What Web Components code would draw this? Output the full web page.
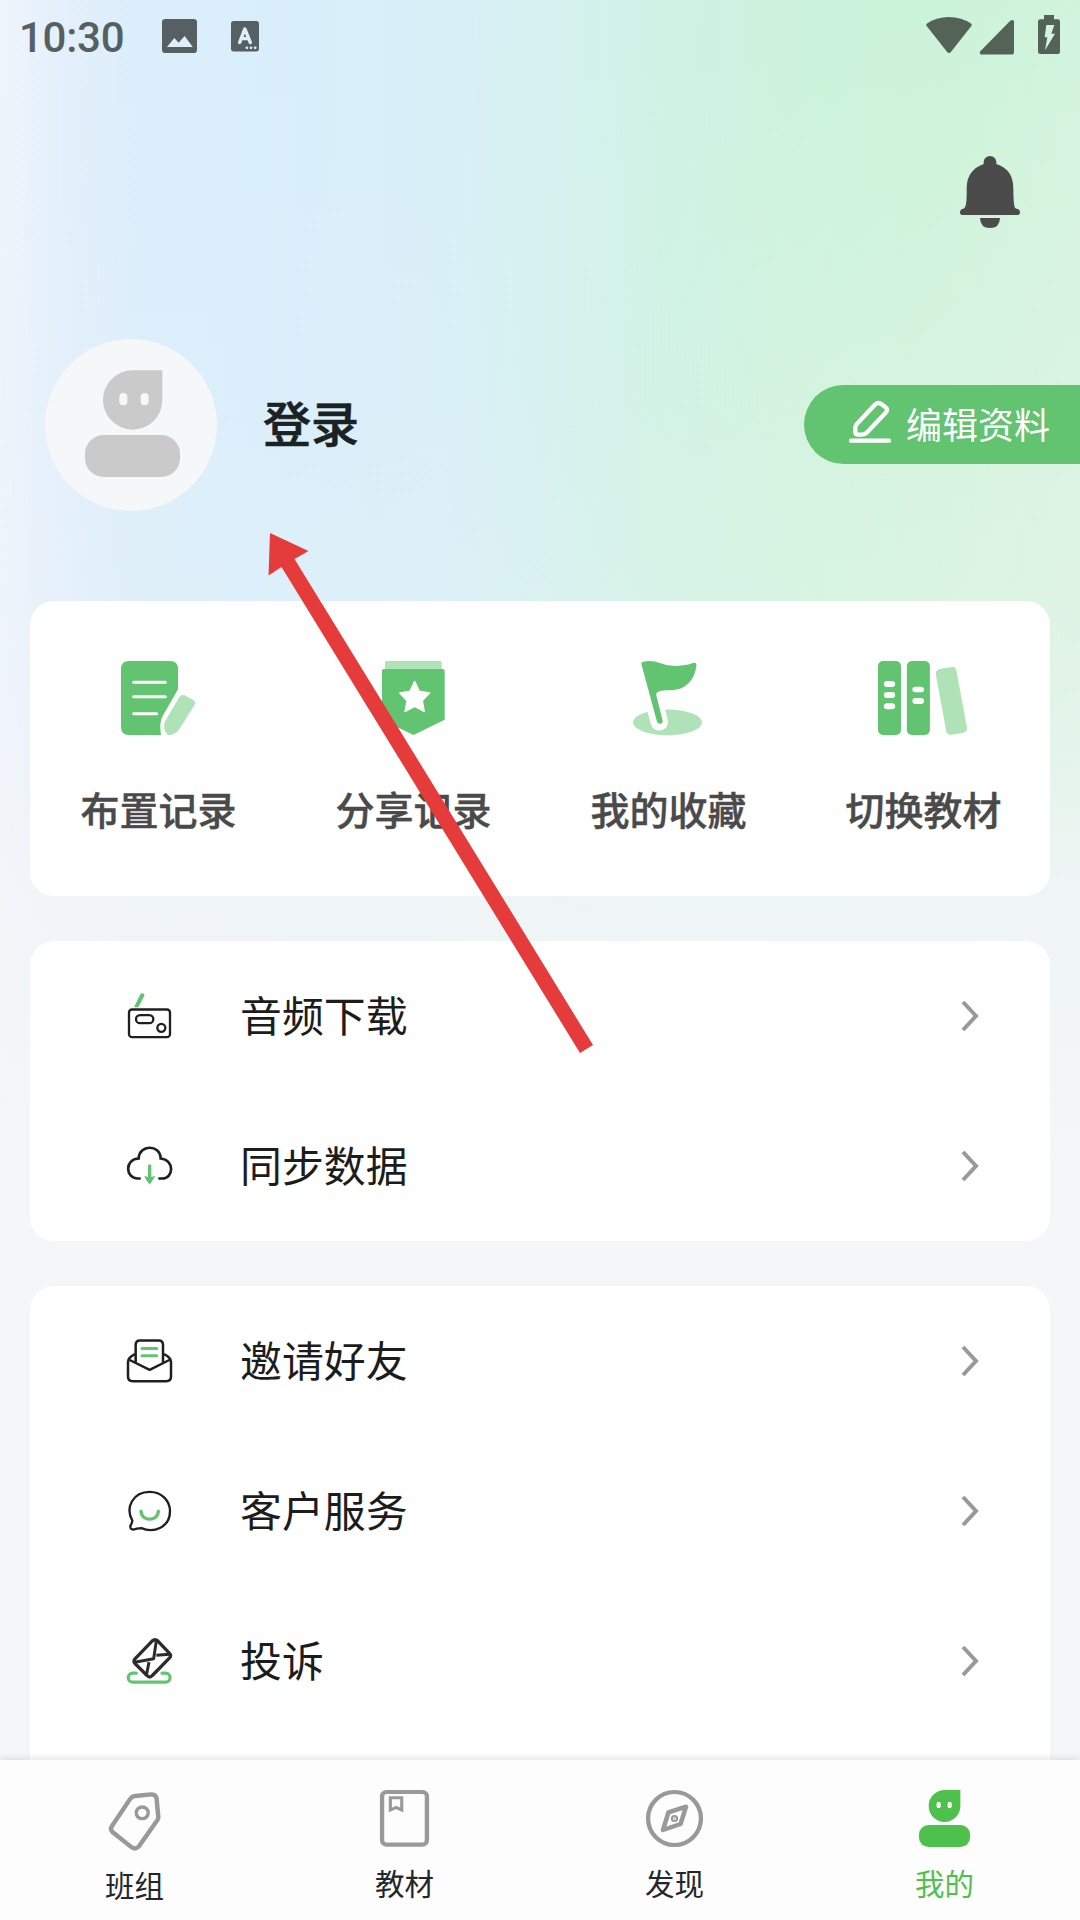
<!DOCTYPE html>
<html lang="zh-CN">
<head>
<meta charset="utf-8">
<title>我的</title>
<style>
html,body{margin:0;padding:0}
body{width:1080px;height:1920px;overflow:hidden;font-family:"Noto Sans CJK SC","Noto Sans",sans-serif;color:#1c1c1c}
</style>
</head>
<body>
<my-page></my-page>
<script>
const G='#62c370', L='#b0e2b7', K='#1f1f1f';
const icons={
 image:[35,34,'470 57 99 102',`<rect x="470" y="57" width="99" height="102" rx="10" fill="#566062"/><path d="M484 141L505 114L517 128L534 108L557 141Z" fill="#dceffa"/>`],
 font:[28,30.5,'671 62 81 92',`<rect x="671" y="62" width="81" height="92" rx="8" fill="#566062"/><path d="M696 127L711 86L727 127M701 115H722" fill="none" stroke="#dceffa" stroke-width="10" stroke-linecap="round" stroke-linejoin="round"/><g fill="#dceffa"><circle cx="717" cy="143" r="4"/><circle cx="729" cy="143" r="4"/><circle cx="741" cy="143" r="4"/></g>`],
 wifi:[46,36,'437 51 137 108',`<path d="M439 71Q468 51 505 51Q543 51 572 71Q575 74 572 78L511 156Q505 162 500 156L439 78Q436 74 439 71Z" fill="#546258"/>`],
 signal:[34,34.5,'600 59 102 103',`<path d="M601 152L690 62Q702 55 702 66V156Q702 162 696 162H604Q597 160 601 152Z" fill="#546258"/>`],
 battery:[22,39,'774 45 66 117',`<path d="M792 45H822V58H834Q840 58 840 65V155Q840 162 834 162H781Q774 162 774 155V65Q774 58 781 58H792Z" fill="#546258"/><path d="M799 75H823L814 101H825L795 151L802 112H794Z" fill="#d3f5de"/>`],
 bell:[60,72,'540 468 180 216',`<path d="M611 492V486A19 18 0 0 1 649 486V492Q699 508 700 563Q700 618 706 625L715 628Q720 631 720 637Q720 645 713 645H547Q540 645 540 637Q540 631 545 628Q553 627 555 622Q561 610 560 563Q561 510 611 492Z" fill="#4b4b4b"/><path d="M600 654H660Q659 684 630 684Q601 684 600 654Z" fill="#4b4b4b"/>`],
 avatar:[172,172,'45 57 516 516',`<circle cx="303" cy="315" r="258" fill="#f5f7f9"/><path d="M308 151H397V241A89 89 0 1 1 308 151Z" fill="#cacaca"/><rect x="165" y="345" width="285" height="126" rx="56" fill="#cacaca"/><g fill="#f5f7f9"><rect x="268" y="219" width="24" height="37" rx="12"/><rect x="332" y="219" width="24" height="37" rx="12"/></g>`],
 edit:[42,42,'207 120 126 126',`<g fill="none" stroke="#fff" stroke-linecap="round" stroke-linejoin="round"><path d="M286 130Q295 122 304 129L318 140Q325 146 317 155L260 215Q255 221 244 221H233Q226 221 226 213V198Q227 193 231 188Z" stroke-width="13"/><path d="M213 239H327" stroke-width="13"/></g>`],
 doc:[74,74,'273 213 222 222',`<path d="M297 213H420Q444 213 444 237V298L398 378Q387 396 393 435H297Q273 435 273 411V237Q273 213 297 213Z" fill="${G}"/><path d="M311 277H406M311 320H406M311 371H380" stroke="#fff" stroke-width="9" stroke-linecap="round"/><path d="M448 321Q456 311 467 317L490 330Q498 336 494 344L447 419Q436 434 416 435Q404 431 402 409Q402 400 406 393Z" fill="${L}"/>`],
 shield:[63,74,'1056 213 190 222',`<path d="M1065 240V218Q1065 213 1070 213H1231Q1236 213 1236 218V240Z" fill="${L}"/><path d="M1062 237H1239Q1245 237 1245 243V389L1151 435L1056 389V243Q1056 237 1062 237Z" fill="${G}"/><path d="M1154.500 275L1168 304L1199 309L1177 332L1183 364L1154.500 349L1126 364L1132 332L1110 309L1141 304Z" fill="#fff" stroke="#fff" stroke-width="5" stroke-linejoin="round"/>`],
 flag:[69,74,'270 213 200 222',`<ellipse cx="370" cy="397" rx="100" ry="38.500" fill="${L}"/><path d="M336 355L346 396" stroke="#fff" stroke-width="51" stroke-linecap="round"/><path d="M294 221Q293 216 300 215Q325 209 348 219Q380 233 415 226Q431 224 446 218Q454 217 454 224C451 260 433 286 406 296C380 304 352 296 339 308Q336 311 338 318L356 392Q356 402 347 401Q341 401 339 393Z" fill="${G}"/>`],
 books:[89,74,'981 213 259 222',`<g fill="${G}"><rect x="981" y="213" width="67" height="222" rx="15"/><rect x="1065" y="213" width="67" height="222" rx="15"/></g><path d="M1160 237L1197 231Q1207 230 1209 241L1240 414Q1241 424 1230 428L1194 434Q1184 435 1180 425L1149 252Q1148 241 1160 237Z" fill="${L}"/><g fill="#fff"><rect x="998" y="273" width="33" height="18" rx="9"/><rect x="998" y="306" width="33" height="18" rx="9"/><rect x="998" y="340" width="33" height="18" rx="9"/><rect x="1081" y="290" width="34" height="17" rx="9"/><rect x="1081" y="324" width="34" height="18" rx="9"/></g>`],
 radio:[45,45,'81 100.500 135 135',`<path d="M102 140L121 101Q124 97 130 99Q135 101 133 106L115 140Z" fill="${G}"/><g fill="none" stroke="${K}" stroke-width="7"><rect x="87" y="147" width="123" height="83" rx="9"/><rect x="108" y="164" width="52" height="24" rx="12"/><circle cx="184" cy="202" r="12"/></g>`],
 cloud:[45,45,'81 550.500 135 135',`<path d="M122 654H113C76 654 73 596 116 594C117 552 180 550 182 594C224 597 222 654 186 654H175" fill="none" stroke="${K}" stroke-width="8"/><path d="M149 616V652" stroke="${G}" stroke-width="10" stroke-linecap="round"/><path d="M133 646Q149 653 165 646Q164 653 149 672Q135 656 133 646Z" fill="${G}"/>`],
 invite:[45,45,'81 85.500 135 135',`<g fill="none" stroke="${K}" stroke-width="7.500" stroke-linejoin="round"><path d="M107 156V103Q107 90 120 90H176Q189 90 189 103V156"/><path d="M105 131Q84 141 84 154V199Q84 212 98 212H199Q213 212 213 199V154Q213 141 192 131M86 147L149 178L211 147"/></g><path d="M126 114H170M126 136H170" stroke="${G}" stroke-width="9" stroke-linecap="round"/>`],
 service:[45,45,'81 535.500 135 135',`<path d="M97 630C75 591 99 544 149 544C185 544 210 571 210 602C210 650 162 669 124 653Q109 654 101 657Q90 658 91 646Q97 637 97 630Z" fill="none" stroke="${K}" stroke-width="7" stroke-linejoin="round"/><path d="M123 602C124 634 174 634 175 602" fill="none" stroke="${G}" stroke-width="10" stroke-linecap="round"/>`],
 complaint:[45,45,'81 985.500 135 135',`<path d="M109 1088H99C80 1088 80 1115 99 1115H196C215 1115 215 1088 196 1088H186" fill="none" stroke="${G}" stroke-width="9.500" stroke-linecap="round"/><g fill="none" stroke="#2c2c2c" stroke-width="10" stroke-linejoin="round"><path d="M157 991Q165 984 173 991L208 1028Q216 1035 208 1043L157 1095Q149 1104 141 1095L105 1059Q99 1052 105 1045Z"/><path d="M169 991L161 1045L104 1055M209 1031L169 1034M147 1055L139 1095" stroke-width="9"/></g>`],
 chevron:[18,32,'0 0 18 32',`<path d="M2 2L15 16L2 30" fill="none" stroke="#999" stroke-width="4"/>`],
 tag:[52,59,'317 155 151 177',`<path d="M379 175Q384 168 393 167L439 162Q452 162 455 173L460 228Q461 234 457 240L403 319Q394 329 383 321L327 275Q320 268 325 258Z" fill="none" stroke="#999" stroke-width="13" stroke-linejoin="round"/><circle cx="413.500" cy="217.500" r="17.500" fill="none" stroke="#999" stroke-width="10"/>`],
 book:[49,57,'1101 150 142 171',`<rect x="1107" y="156" width="130" height="158" rx="13" fill="none" stroke="#999" stroke-width="12.500"/><path d="M1131 173H1164V210L1148 202L1131 210Z" fill="none" stroke="#999" stroke-width="9"/>`],
 compass:[57,57,'308 150 165 171',`<ellipse cx="390.500" cy="235.500" rx="76.500" ry="79.500" fill="none" stroke="#999" stroke-width="12.500"/><path d="M373 217L424 200L408 252L357 270Z" fill="none" stroke="#999" stroke-width="13" stroke-linejoin="round"/><circle cx="390.500" cy="235.500" r="7.500" fill="none" stroke="#999" stroke-width="6"/><circle cx="390.500" cy="235.500" r="2" fill="#999"/>`],
 me:[51,57,'1101 150 148 171',`<path d="M1175 150H1221V198A46 48 0 1 1 1175 150Z" fill="#4dc14b"/><rect x="1101" y="255" width="148" height="66" rx="28" fill="#4dc14b"/><g fill="#fff"><rect x="1152" y="185" width="12" height="20" rx="6"/><rect x="1184" y="185" width="12" height="20" rx="6"/></g>`]
};
const define=(name,render)=>customElements.define(name,class extends HTMLElement{
  connectedCallback(){ if(!this.shadowRoot) this.attachShadow({mode:'open'}).innerHTML=render(this); }
});
define('ui-icon',el=>{
  const [w,h,vb,body]=icons[el.getAttribute('name')];
  return `<style>:host{display:block;flex:none}svg{display:block;overflow:visible}</style><svg width="${w}" height="${h}" viewBox="${vb}" preserveAspectRatio="none">${body}</svg>`;
});
define('status-bar',()=>`<style>
:host{display:flex;height:72px;box-sizing:border-box;padding:0 20px 0 19px;align-items:center;justify-content:space-between}
.l,.r{display:flex}.l{align-items:center}.r{align-items:flex-end;height:39px;margin-bottom:3px}
time{font:500 42px/44px Roboto,sans-serif;color:#566062;width:143px;letter-spacing:-.25px;margin-top:4px}
.a{margin-right:34px}.w{margin:0 8px 1px 0}.s{margin-right:24px}
</style><div class="l"><time>10:30</time><ui-icon class="a" name="image"></ui-icon><ui-icon name="font"></ui-icon></div>
<div class="r"><ui-icon class="w" name="wifi"></ui-icon><ui-icon class="s" name="signal"></ui-icon><ui-icon name="battery"></ui-icon></div>`);
define('profile-header',()=>`<style>
:host{display:flex;flex-direction:column;height:529px}
.top{display:flex;justify-content:flex-end;padding:84px 60px 0 0;height:183px}
.row{display:flex;align-items:center;padding-left:45px;height:172px}
h1{margin:0 auto 8px 46px;font-size:48px;line-height:60px;font-weight:500;color:#1b2223;-webkit-text-stroke:.7px #1b2223}
</style><div class="top"><ui-icon name="bell"></ui-icon></div>
<div class="row"><ui-icon name="avatar"></ui-icon><h1>登录</h1><edit-button>编辑资料</edit-button></div>`);
define('edit-button',()=>`<style>
:host{display:flex;box-sizing:border-box;width:276px;height:79px;margin-bottom:2px;border-radius:40px 0 0 40px;background:#62c370;color:#fff;align-items:center;padding-left:45px;gap:15px;font-size:36px;line-height:48px}
ui-icon{margin-bottom:5px}span{margin-bottom:2px}
</style><ui-icon name="edit"></ui-icon><span><slot></slot></span>`);
define('panel-card',()=>`<style>:host{display:flex;flex-direction:column;flex:none;margin:0 30px;border-radius:24px;background:#fff;box-sizing:border-box}</style><slot></slot>`);
define('quick-actions',()=>`<style>:host{display:grid;grid-template-columns:repeat(4,255px);height:295px}</style><slot></slot>`);
define('quick-action',el=>`<style>
:host{display:flex;flex-direction:column;align-items:center;padding:60px 0 0 1px;font-size:39px;line-height:56px;font-weight:500;color:#4a4a4a;-webkit-text-stroke:.4px #4a4a4a}
:host([icon=shield]) ui-icon{padding-left:1px}
:host([icon=flag]) ui-icon,:host([icon=books]) ui-icon{padding-right:2px}
span{margin-top:45px;padding-left:1px}
</style><ui-icon name="${el.getAttribute('icon')}"></ui-icon><span><slot></slot></span>`);
define('menu-row',el=>`<style>
:host{display:flex;height:150px;align-items:center;padding:0 71px 0 97px;font-size:41.900px;line-height:60px;color:#1c1c1c}
span{margin:0 0 4px 68px;flex:1}
.c{margin-bottom:1px}
</style><ui-icon name="${el.getAttribute('icon')}"></ui-icon><span><slot></slot></span><ui-icon class="c" name="chevron"></ui-icon>`);
define('tab-item',el=>`<style>
:host{display:flex;flex-direction:column;align-items:center;box-sizing:border-box;width:270px;padding:30px 1px 0 0;font-size:29.500px;line-height:42px;color:#23262b}
:host([active]){color:#4dc14b}:host([icon=tag]){padding-top:32px}
:host([icon=tag]) span{margin-top:12px}
span{margin-top:14px}
</style><ui-icon name="${el.getAttribute('icon')}"></ui-icon><span><slot></slot></span>`);
define('tab-bar',()=>`<style>:host{display:flex;flex:none;height:160px;background:#fdfdfd;box-shadow:0 -2px 7px rgba(0,0,0,.1);z-index:1}</style><slot></slot>`);
define('pointer-arrow',()=>`<style>:host{position:absolute;left:268px;top:532px;pointer-events:none;z-index:2}svg{display:block}</style>
<svg width="326" height="523" viewBox="268 532 326 523"><path d="M270 533L308.500 551L294.500 559L593 1045L580 1053L281.500 567L268.500 575.500Z" fill="#e53b3b"/></svg>`);
define('my-page',()=>`<style>
:host{display:flex;flex-direction:column;position:relative;width:1080px;height:1920px;overflow:hidden;
background:
 linear-gradient(180deg,rgba(245,246,249,0) 0,rgba(245,246,249,.06) 400px,rgba(245,246,249,.16) 600px,rgba(245,246,249,.4) 740px,rgba(243,245,248,.85) 890px,#f5f6f9 1200px),
 radial-gradient(circle 640px at 1200px 560px,rgba(224,243,228,.8),rgba(224,243,228,0)),
 linear-gradient(91deg,#eff4fb 0,#e4f0fb 60px,#dceefb 140px,#d9eefb 270px,#d8eff7 450px,#d5f1ee 560px,#cff2e4 670px,#ccf3dc 810px,#cbf3d9 950px,#d1f3dd 1090px)}
main{display:flex;flex-direction:column;gap:45px;flex:1;min-height:0;overflow:hidden}
</style>
<status-bar></status-bar><profile-header></profile-header>
<main>
<panel-card><quick-actions><quick-action icon="doc">布置记录</quick-action><quick-action icon="shield">分享记录</quick-action><quick-action icon="flag">我的收藏</quick-action><quick-action icon="books">切换教材</quick-action></quick-actions></panel-card>
<panel-card><menu-row icon="radio">音频下载</menu-row><menu-row icon="cloud">同步数据</menu-row></panel-card>
<panel-card style="height:600px"><menu-row icon="invite">邀请好友</menu-row><menu-row icon="service">客户服务</menu-row><menu-row icon="complaint">投诉</menu-row></panel-card>
</main>
<tab-bar><tab-item icon="tag">班组</tab-item><tab-item icon="book">教材</tab-item><tab-item icon="compass">发现</tab-item><tab-item icon="me" active>我的</tab-item></tab-bar>
<pointer-arrow></pointer-arrow>`);
</script>
</body>
</html>
